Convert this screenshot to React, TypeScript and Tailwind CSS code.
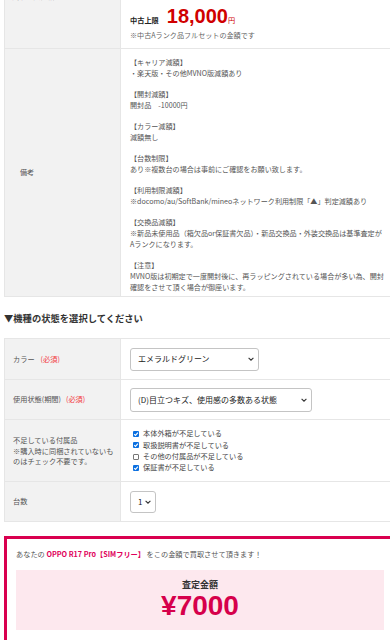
import React from "react"

const NOTES: string[][] = [
  ["【キャリア減額】", "・楽天版・その他MVNO版減額あり"],
  ["【開封減額】", "開封品　-10000円"],
  ["【カラー減額】", "減額無し"],
  ["【台数制限】", "あり※複数台の場合は事前にご確認をお願い致します。"],
  ["【利用制限減額】", "※docomo/au/SoftBank/mineoネットワーク利用制限「▲」判定減額あり"],
  [
    "【交換品減額】",
    "※新品未使用品（箱欠品or保証書欠品）・新品交換品・外装交換品は基準査定が",
    "Aランクになります。",
  ],
  [
    "【注意】",
    "MVNO版は初期定で一度開封後に、再ラッピングされている場合が多い為、開封",
    "確認をさせて頂く場合が御座います。",
  ],
]

const ACCESSORIES = [
  { label: "本体外箱が不足している", checked: true },
  { label: "取扱説明書が不足している", checked: true },
  { label: "その他の付属品が不足している", checked: false },
  { label: "保証書が不足している", checked: true },
]

function Chevron() {
  return (
    <svg width="6" height="4" viewBox="0 0 6 4" className="shrink-0">
      <path d="M0.6 0.8 L3 3.2 L5.4 0.8" fill="none" stroke="#333" strokeWidth="1.1" />
    </svg>
  )
}

function FakeSelect({ value, width, height }: { value: string; width: string; height: string }) {
  return (
    <div
      className={`${width} ${height} flex items-center justify-between pl-[7px] pr-[4px] bg-white border border-[#c4c4c4] rounded-[3px] text-[8px] text-[#222] whitespace-nowrap`}
    >
      <span>{value}</span>
      <Chevron />
    </div>
  )
}

function Required() {
  return <span className="text-[#f2383d]">(必須)</span>
}

function Checkbox({ checked }: { checked: boolean }) {
  if (checked) {
    return (
      <span className="w-[6px] h-[6px] rounded-[1px] bg-[#0a6fe0] flex items-center justify-center shrink-0">
        <svg width="6" height="6" viewBox="0 0 6 6">
          <path d="M1.2 3.1 L2.5 4.4 L4.9 1.6" fill="none" stroke="#fff" strokeWidth="1.1" />
        </svg>
      </span>
    )
  }
  return <span className="w-[6px] h-[6px] rounded-[1px] border border-[#767676] bg-white shrink-0" />
}

export default function App() {
  return (
    <div className="w-[390px] h-[640px] overflow-hidden bg-white font-['Noto_Sans_CJK_JP',sans-serif] text-[#555]">
      <div className="w-[392px] ml-[4px] -mt-[54px]">
        {/* ── 上限価格 / 備考 ── */}
        <div className="border border-[#e6e6e6] text-[7.1px]">
          <div className="flex h-[102px] border-b border-[#e6e6e6]">
            <div className="w-[116px] shrink-0 bg-[#f2f2f2] border-r border-[#e6e6e6] flex items-center pl-[7px] pb-[2px]">
              買取上限価格
            </div>
            <div className="flex-1 flex flex-col justify-end pl-[9px] pb-[8px]">
              <div className="flex items-baseline leading-[20px]">
                <span className="font-bold text-[#222] text-[7.2px]">中古上限</span>
                <span className="ml-[8px] font-['Liberation_Sans',sans-serif] font-bold text-[20px] text-[#d00000]">
                  18,000
                </span>
                <span className="text-[#d00000] text-[7.2px]">円</span>
              </div>
              <div className="leading-[10px] text-[#666]">※中古Aランク品フルセットの金額です</div>
            </div>
          </div>
          <div className="flex">
            <div className="w-[116px] shrink-0 bg-[#f2f2f2] border-r border-[#e6e6e6] flex items-center pl-[15px]">
              備考
            </div>
            <div className="flex-1 pl-[9px] pt-[8px] pb-[4px] leading-[10.7px] text-[#555] whitespace-nowrap">
              {NOTES.map((para, i) => (
                <div key={i} className={i > 0 ? "mt-[10.7px]" : ""}>
                  {para.map((line, j) => (
                    <div key={j}>{line}</div>
                  ))}
                </div>
              ))}
            </div>
          </div>
        </div>

        {/* ── 機種の状態 ── */}
        <h2 className="mt-[15px] mb-[14px] text-[9.3px] leading-[12px] font-bold text-[#333]">
          ▼機種の状態を選択してください
        </h2>

        <div className="border border-[#e6e6e6] text-[7.2px]">
          <div className="flex h-[41px] border-b border-[#e6e6e6]">
            <div className="w-[116px] shrink-0 bg-[#f2f2f2] border-r border-[#e6e6e6] flex items-center pl-[8px]">
              カラー
              <span className="ml-[6px]">
                <Required />
              </span>
            </div>
            <div className="flex-1 flex items-center pl-[9px]">
              <FakeSelect value="エメラルドグリーン" width="w-[129px]" height="h-[23px]" />
            </div>
          </div>
          <div className="flex h-[40px] border-b border-[#e6e6e6]">
            <div className="w-[116px] shrink-0 bg-[#f2f2f2] border-r border-[#e6e6e6] flex items-center pl-[8px]">
              使用状態(期間)
              <span className="ml-[5px]">
                <Required />
              </span>
            </div>
            <div className="flex-1 flex items-center pl-[9px]">
              <FakeSelect value="(D)目立つキズ、使用感の多数ある状態" width="w-[182px]" height="h-[24px]" />
            </div>
          </div>
          <div className="flex h-[62px] border-b border-[#e6e6e6]">
            <div className="w-[116px] shrink-0 bg-[#f2f2f2] border-r border-[#e6e6e6] flex flex-col justify-center pl-[8px] leading-[10.3px] whitespace-nowrap">
              <div>不足している付属品</div>
              <div>※購入時に同梱されていないも</div>
              <div>のはチェック不要です。</div>
            </div>
            <div className="flex-1 flex flex-col justify-center pl-[12px] leading-[11.3px] text-[#444]">
              {ACCESSORIES.map((a) => (
                <div key={a.label} className="flex items-center gap-[4px]">
                  <Checkbox checked={a.checked} />
                  <span>{a.label}</span>
                </div>
              ))}
            </div>
          </div>
          <div className="flex h-[39px]">
            <div className="w-[116px] shrink-0 bg-[#f2f2f2] border-r border-[#e6e6e6] flex items-center pl-[8px]">
              台数
            </div>
            <div className="flex-1 flex items-center pl-[9px]">
              <FakeSelect value="1" width="w-[26px]" height="h-[22px]" />
            </div>
          </div>
        </div>

        {/* ── 査定結果 ── */}
        <div className="mt-[14px] border-[3px] border-[#d9004f] px-[9px] pt-[10px] pb-[10px]">
          <p className="text-[7.2px] leading-[11px] text-[#555] whitespace-nowrap">
            あなたの <span className="font-bold text-[#e0005a]">OPPO R17 Pro【SIMフリー】</span> をこの金額で買取させて頂きます！
          </p>
          <div className="mt-[10px] bg-[#fde8ee] pt-[9px] pb-[9px] flex flex-col items-center">
            <div className="text-[9px] leading-[12px] font-bold text-[#333]">査定金額</div>
            <div className="font-['Liberation_Sans',sans-serif] font-bold text-[28px] leading-[30px] text-[#d6004b]">
              ¥7000
            </div>
          </div>
        </div>
      </div>
    </div>
  )
}
